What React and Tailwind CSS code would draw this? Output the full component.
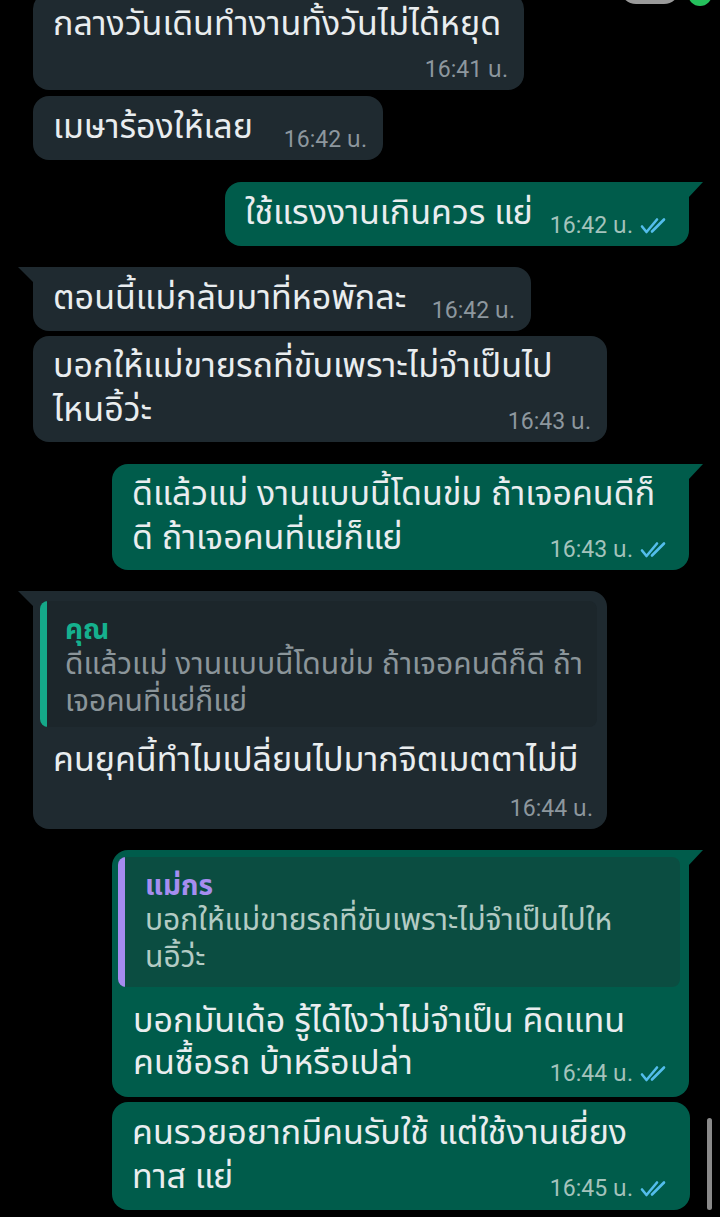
import React from "react";

const FONT = { fontFamily: "'Noto Sans Thai', 'Noto Sans Thai UI', Roboto, 'Noto Sans', 'DejaVu Sans', sans-serif" };

function Ticks() {
  return (
    <svg width="32" height="18" viewBox="0 0 32 18" className="ml-[6px] mb-[3px]" fill="none" stroke="#53bdeb" strokeWidth="2.6" strokeLinecap="round" strokeLinejoin="round">
      <path d="M3 9.5 L7.5 15 L18 2.5" />
      <path d="M13 14.5 L25 2.5" />
    </svg>
  );
}

function Time({ t, out }) {
  return (
    <span className={`flex items-end shrink-0 text-[23px] leading-[24px] ${out ? "text-[#a4c3bc]" : "text-[#8d979e]"}`} style={{ fontFamily: "Roboto, 'Noto Sans Thai', sans-serif" }}>
      <span>{t}</span>
      {out && <Ticks />}
    </span>
  );
}

function TailIn() {
  return (
    <svg className="absolute left-[-15px] top-0" width="16" height="16" viewBox="0 0 16 16">
      <path d="M0 0 H16 V16 Z" fill="#1f2a30" />
    </svg>
  );
}

function TailOut() {
  return (
    <svg className="absolute right-[-14px] top-0" width="15" height="16" viewBox="0 0 15 16">
      <path d="M0 0 H15 L0 16 Z" fill="#005c4b" />
    </svg>
  );
}

export default function App() {
  return (
    <div className="relative w-[720px] h-[1217px] bg-black overflow-hidden text-[#e9edef]" style={FONT}>
      {/* partial avatars at top */}
      <div className="absolute right-[40px] top-[-28px] w-[60px] h-[32px] rounded-full bg-[#9a9a9a]" />
      <div className="absolute right-[8px] top-[-18px] w-[24px] h-[24px] rounded-full bg-[#25c05c]" />

      <div className="flex flex-col text-[34px] leading-[44px]">
        {/* B1 */}
        <div className="ml-[33px] mt-[-7px] w-[491px] rounded-[16px] bg-[#1f2a30] pl-[20px] pr-[16px] pt-[10px] pb-[8px] flex flex-col">
          <div>กลางวันเดินทำงานทั้งวันไม่ได้หยุด</div>
          <div className="flex justify-end mt-[11px]"><Time t="16:41 น." /></div>
        </div>

        {/* B2 */}
        <div className="ml-[33px] mt-[6px] w-[350px] rounded-[16px] bg-[#1f2a30] pl-[20px] pr-[16px] pt-[10px] pb-[10px] flex justify-between items-end">
          <div>เมษาร้องให้เลย</div>
          <div className="mb-[-2px]"><Time t="16:42 น." /></div>
        </div>

        {/* B3 out */}
        <div className="relative self-end mr-[31px] mt-[22px] w-[464px] rounded-[16px] rounded-tr-none bg-[#005c4b] pl-[20px] pr-[18px] pt-[10px] pb-[10px] flex justify-between items-end">
          <TailOut />
          <div>ใช้แรงงานเกินควร แย่</div>
          <div className="mb-[-2px]"><Time t="16:42 น." out /></div>
        </div>

        {/* B4 in */}
        <div className="relative ml-[33px] mt-[21px] w-[498px] rounded-[16px] rounded-tl-none bg-[#1f2a30] pl-[20px] pr-[16px] pt-[10px] pb-[10px] flex justify-between items-end">
          <TailIn />
          <div>ตอนนี้แม่กลับมาที่หอพักละ</div>
          <div className="mb-[-2px]"><Time t="16:42 น." /></div>
        </div>

        {/* B5 */}
        <div className="ml-[33px] mt-[5px] w-[574px] rounded-[16px] bg-[#1f2a30] pl-[20px] pr-[16px] pt-[9px] pb-[9px] flex flex-col">
          <div className="whitespace-nowrap">บอกให้แม่ขายรถที่ขับเพราะไม่จำเป็นไป</div>
          <div className="flex justify-between items-end">
            <div>ไหนอิ้ว่ะ</div>
            <div className="mb-[-1px]"><Time t="16:43 น." /></div>
          </div>
        </div>

        {/* B6 out */}
        <div className="relative self-end mr-[31px] mt-[22px] w-[577px] rounded-[16px] rounded-tr-none bg-[#005c4b] pl-[20px] pr-[18px] pt-[9px] pb-[9px] flex flex-col">
          <TailOut />
          <div className="whitespace-nowrap">ดีแล้วแม่ งานแบบนี้โดนข่ม ถ้าเจอคนดีก็</div>
          <div className="flex justify-between items-end">
            <div>ดี ถ้าเจอคนที่แย่ก็แย่</div>
            <div className="mb-[-1px]"><Time t="16:43 น." out /></div>
          </div>
        </div>

        {/* B7 in with quote */}
        <div className="relative ml-[33px] mt-[21px] w-[574px] rounded-[16px] rounded-tl-none bg-[#1f2a30] pl-[7px] pr-[10px] pt-[10px] pb-[8px] flex flex-col">
          <TailIn />
          <div className="flex rounded-[8px] bg-[#1c262b] overflow-hidden h-[126px]">
            <div className="w-[7px] bg-[#15a889] shrink-0" />
            <div className="pl-[18px] pt-[14px] flex flex-col">
              <div className="text-[#15b08e] text-[28px] leading-[32px] font-bold">คุณ</div>
              <div className="text-[#8b959a] text-[30px] leading-[37px] whitespace-nowrap">ดีแล้วแม่ งานแบบนี้โดนข่ม ถ้าเจอคนดีก็ดี ถ้า<br />เจอคนที่แย่ก็แย่</div>
            </div>
          </div>
          <div className="pl-[13px] mt-[12px] whitespace-nowrap">คนยุคนี้ทำไมเปลี่ยนไปมากจิตเมตตาไม่มี</div>
          <div className="flex justify-end mt-[14px] pr-[4px]"><Time t="16:44 น." /></div>
        </div>

        {/* B8 out with quote */}
        <div className="relative self-end mr-[31px] mt-[21px] w-[577px] rounded-[16px] rounded-tr-none bg-[#005c4b] pl-[6px] pr-[18px] pt-[7px] pb-[12px] flex flex-col">
          <TailOut />
          <div className="flex rounded-[8px] bg-[#0b4d41] overflow-hidden h-[130px] mr-[-9px]">
            <div className="w-[7px] bg-[#a58bf0] shrink-0" />
            <div className="pl-[20px] pt-[14px] flex flex-col">
              <div className="text-[#a68df0] text-[28px] leading-[32px] font-bold">แม่กร</div>
              <div className="text-[#b3cbc4] text-[30px] leading-[37px] whitespace-nowrap">บอกให้แม่ขายรถที่ขับเพราะไม่จำเป็นไปให<br />นอิ้ว่ะ</div>
            </div>
          </div>
          <div className="pl-[15px] mt-[14px] leading-[42px] whitespace-nowrap">บอกมันเด้อ รู้ได้ไงว่าไม่จำเป็น คิดแทน</div>
          <div className="pl-[15px] flex justify-between items-end leading-[42px]">
            <div>คนซื้อรถ บ้าหรือเปล่า</div>
            <div className="mb-[-1px]"><Time t="16:44 น." out /></div>
          </div>
        </div>

        {/* B9 out */}
        <div className="self-end mr-[30px] mt-[5px] w-[578px] rounded-[16px] bg-[#005c4b] pl-[20px] pr-[19px] pt-[10px] pb-[10px] flex flex-col">
          <div className="whitespace-nowrap">คนรวยอยากมีคนรับใช้ แต่ใช้งานเยี่ยง</div>
          <div className="flex justify-between items-end">
            <div>ทาส แย่</div>
            <div className="mb-[-1px]"><Time t="16:45 น." out /></div>
          </div>
        </div>
      </div>

      {/* scrollbar */}
      <div className="absolute right-[8px] top-[1118px] w-[5px] h-[92px] rounded-full bg-[#8a8a8a]" />
    </div>
  );
}
